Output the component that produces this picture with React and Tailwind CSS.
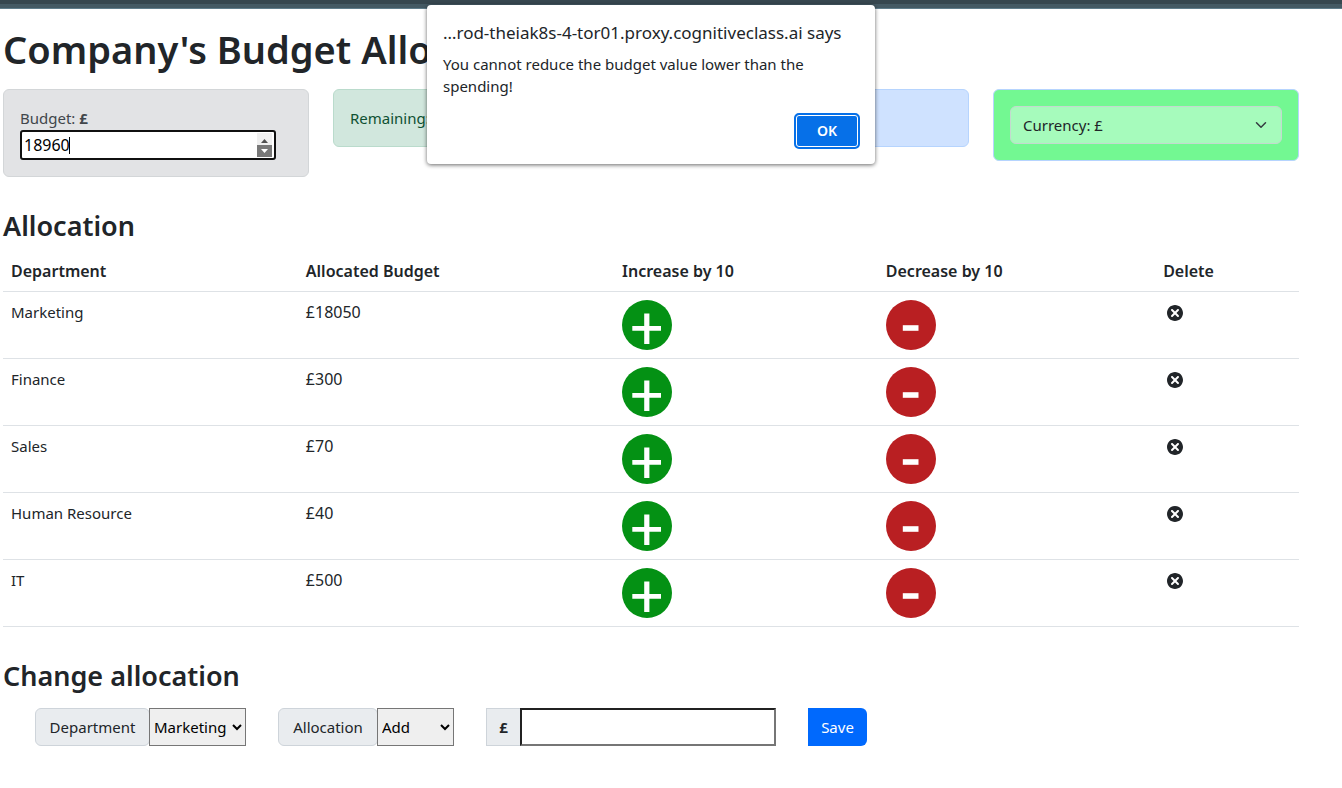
import React from "react";
import { TiDelete } from "react-icons/ti";

const departments = [
  { name: "Marketing", budget: 18050 },
  { name: "Finance", budget: 300 },
  { name: "Sales", budget: 70 },
  { name: "Human Resource", budget: 40 },
  { name: "IT", budget: 500 },
];

function PlusIcon() {
  return (
    <svg viewBox="0 0 50 50" className="size-[50px]" aria-hidden="true">
      <circle cx="25" cy="25" r="25" fill="#049114" />
      <path d="M10.3 26h28.7v4.8H10.3z M22.2 13.4h5.2v30.6h-5.2z" fill="#fff" />
    </svg>
  );
}

function MinusIcon() {
  return (
    <svg viewBox="0 0 50 50" className="size-[50px]" aria-hidden="true">
      <circle cx="25" cy="25" r="25" fill="#b91f22" />
      <path d="M16.8 25.2h15.7v5.6H16.8z" fill="#fff" />
    </svg>
  );
}

function BudgetCard() {
  return (
    <div className="rounded-md border border-[#d3d6d8] bg-[#e2e3e5] p-4 text-[#41464b]">
      <label htmlFor="budget" className="block">
        Budget: <b>£</b>
      </label>
      <div className="relative flex h-[30px] w-64 max-w-full rounded-[3px] border-2 border-[#101010] bg-white text-base text-black">
        <input
          id="budget"
          type="number"
          defaultValue={18960}
          className="min-w-0 flex-1 [appearance:textfield] bg-transparent pl-[2px] caret-transparent outline-none [&::-webkit-inner-spin-button]:appearance-none"
        />
        <span className="absolute top-[5px] left-[47px] h-[17px] w-px bg-black" />
        <div className="mt-px mr-[2px] flex w-[15px] flex-col">
          <button type="button" aria-label="Increase budget" className="flex h-3 items-center justify-center bg-[#efefef]">
            <svg viewBox="0 0 7 4" className="mt-1 h-1 w-[7px]" aria-hidden="true"><path d="M0 4L3.5 0L7 4z" fill="#505050" /></svg>
          </button>
          <button type="button" aria-label="Decrease budget" className="flex h-3 items-center justify-center bg-[#787878]">
            <svg viewBox="0 0 7 4" className="h-1 w-[7px]" aria-hidden="true"><path d="M0 0H7L3.5 4z" fill="#fff" /></svg>
          </button>
        </div>
      </div>
    </div>
  );
}

function CurrencyCard() {
  return (
    <div className="rounded-md border border-[#b6d4fe] bg-[#73f892] p-4">
      <button
        type="button"
        className="flex h-[38px] w-full items-center justify-between rounded-md border border-[#c4d9cf] bg-[#a6fbbc] px-3 text-[#212529]"
      >
        <span>Currency: £</span>
        <svg viewBox="0 0 16 16" className="mr-[2px] size-3" fill="none" stroke="#343a40" strokeWidth="2" strokeLinecap="round" strokeLinejoin="round" aria-hidden="true">
          <path d="m2 5 6 6 6-6" />
        </svg>
      </button>
    </div>
  );
}

function AllocationTable() {
  return (
    <table className="mt-2 w-full table-fixed text-left">
      <colgroup>
        <col className="w-[22.75%]" />
        <col className="w-[24.4%]" />
        <col className="w-[20.35%]" />
        <col className="w-[21.4%]" />
        <col />
      </colgroup>
      <thead>
        <tr className="border-b border-[#dee2e6]">
          {["Department", "Allocated Budget", "Increase by 10", "Decrease by 10", "Delete"].map((title) => (
            <th key={title} scope="col" className="p-2 text-base font-semibold">{title}</th>
          ))}
        </tr>
      </thead>
      <tbody>
        {departments.map((d) => (
          <tr key={d.name} className="border-b border-[#dee2e6] align-top">
            <td className="p-2">{d.name}</td>
            <td className="p-2 text-base">£{d.budget}</td>
            <td className="p-2">
              <button type="button" aria-label={`Increase ${d.name}`} className="block"><PlusIcon /></button>
            </td>
            <td className="p-2">
              <button type="button" aria-label={`Decrease ${d.name}`} className="block"><MinusIcon /></button>
            </td>
            <td className="p-2">
              <button type="button" aria-label={`Delete ${d.name}`} className="flex h-[26px] items-center"><TiDelete size={24} /></button>
            </td>
          </tr>
        ))}
      </tbody>
    </table>
  );
}

function AllocationForm() {
  return (
    <form className="mt-[15px] flex flex-wrap gap-8 pl-8" onSubmit={(e) => e.preventDefault()}>
      <div className="flex h-[38px]">
        <label htmlFor="department" className="flex w-[115px] items-center justify-center rounded-md border border-[#ced4da] bg-[#e9ecef]">Department</label>
        <select id="department" className="-ml-px w-[97px] border border-[#767676] bg-[#efefef] text-black">
          {departments.map((d) => <option key={d.name}>{d.name}</option>)}
        </select>
      </div>
      <div className="flex h-[38px]">
        <label htmlFor="action" className="flex w-[100px] items-center justify-center rounded-md border border-[#ced4da] bg-[#e9ecef]">Allocation</label>
        <select id="action" className="-ml-px w-[77px] border border-[#767676] bg-[#efefef] text-black">
          <option>Add</option>
          <option>Reduce</option>
        </select>
      </div>
      <div className="flex h-[38px]">
        <label htmlFor="amount" className="flex w-[34px] items-center justify-center border border-r-0 border-[#ced4da] bg-[#e9ecef] font-bold">£</label>
        <input id="amount" type="number" className="w-64 border-2 border-t-[#212121] border-r-[#767676] border-b-[#767676] border-l-[#212121] bg-white px-1" />
      </div>
      <button type="submit" className="h-[38px] w-[59px] rounded-r-md bg-[#0069fd] text-white">Save</button>
    </form>
  );
}

function AlertDialog() {
  return (
    <div
      role="alertdialog"
      aria-labelledby="alert-title"
      aria-describedby="alert-text"
      className="absolute -top-1 left-1/2 flex w-md -translate-x-1/2 flex-col rounded-[4px] bg-white p-4 pr-[15px] pb-[15px] shadow-[0_1px_4px_rgba(0,0,0,0.6)]"
    >
      <h2 id="alert-title" className="text-[17px] leading-6 whitespace-nowrap">…rod-theiak8s-4-tor01.proxy.cognitiveclass.ai says</h2>
      <p id="alert-text" className="mt-2 pr-8 leading-[22px]">You cannot reduce the budget value lower than the spending!</p>
      <button
        type="button"
        className="mt-4 h-9 w-[66px] self-end rounded-[5px] border-2 border-[#0670e8] bg-[#0670e8] text-sm font-semibold text-white inset-ring inset-ring-white"
      >
        OK
      </button>
    </div>
  );
}

export default function App() {
  return (
    <div className="min-h-screen bg-white font-['Noto_Sans',sans-serif] text-[15px] leading-6 text-[#212529]">
      <div className="h-[9px] border-b border-[#607d8b] bg-[#455a64]">
        <div className="h-1 bg-[#37474f]" />
      </div>
      <main className="relative mr-[43px] ml-[3px] pt-4">
        <h1 className="text-[38px] leading-[48px] font-semibold whitespace-nowrap">Company's Budget Allocation</h1>
        <div className="mt-4 grid grid-cols-4 items-start gap-6">
          <BudgetCard />
          <div className="rounded-md border border-[#badbcc] bg-[#d1e7dd] p-4 text-[#0f5132]">Remaining: £0</div>
          <div className="h-[58px] rounded-md border border-[#b6d4fe] bg-[#cfe2ff]" />
          <CurrencyCard />
        </div>
        <h3 className="mt-8 text-[27px] leading-[34px] font-semibold">Allocation</h3>
        <AllocationTable />
        <h3 className="mt-8 text-[27px] leading-[34px] font-semibold">Change allocation</h3>
        <AllocationForm />
        <AlertDialog />
      </main>
    </div>
  );
}
